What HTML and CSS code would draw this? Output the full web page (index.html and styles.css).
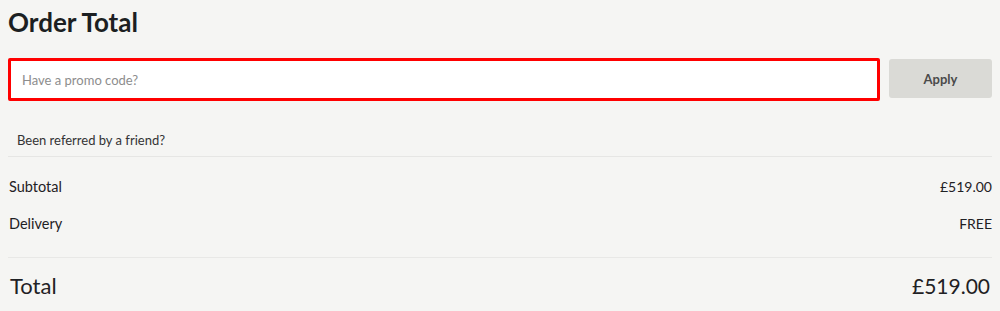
FILE: index.html
```html
<!DOCTYPE html>
<html>
<head>
<meta charset="utf-8">
<link rel="stylesheet" href="styles.css">
</head>
<body>
<div class="order">
  <h1 class="title">Order Total</h1>
  <div class="promo">
    <input class="promo-input" type="text" placeholder="Have a promo code?">
    <button class="apply">Apply</button>
  </div>
  <div class="referral">Been referred by a friend?</div>
  <div class="lines">
    <div class="line"><span>Subtotal</span><span class="amt-sm">£519.00</span></div>
    <div class="line"><span>Delivery</span><span class="amt-sm">FREE</span></div>
  </div>
  <div class="total"><span>Total</span><span class="amt-lg">£519.00</span></div>
</div>
</body>
</html>
```
FILE: styles.css
```css
html, body {
  margin: 0;
  padding: 0;
  background: #f5f5f3;
}
body {
  padding: 0 8px;
  font-family: "Lato", "Liberation Sans", sans-serif;
  color: #1f2124;
}
.order {
  display: flex;
  flex-direction: column;
}
.title {
  margin: 0;
  padding-top: 7px;
  font-size: 26px;
  line-height: 30px;
  font-weight: 700;
  color: #1c1f22;
}
.promo {
  display: flex;
  align-items: flex-start;
  gap: 9px;
  margin-top: 21px;
}
.promo-input {
  flex: 1;
  box-sizing: border-box;
  height: 43px;
  border: 3px solid #ff0000;
  border-radius: 2px;
  background: #fff;
  padding: 0 11px;
  font-family: inherit;
  font-size: 13px;
  color: #333;
  outline: none;
}
.promo-input::placeholder {
  color: #8d8d8d;
}
.apply {
  box-sizing: border-box;
  width: 103px;
  height: 39px;
  margin-top: 1px;
  border: none;
  border-radius: 3px;
  background: #dadad6;
  font-family: inherit;
  font-size: 13px;
  font-weight: 700;
  color: #4a4a4a;
}
.referral {
  padding: 29px 9px 0;
  height: 26px;
  font-size: 13px;
  line-height: 20px;
  color: #333;
  border-bottom: 1px solid #e6e6e4;
}
.lines {
  display: flex;
  flex-direction: column;
  gap: 17px;
  padding: 20px 0 23px;
  border-bottom: 1px solid #e8e8e6;
}
.line {
  display: flex;
  justify-content: space-between;
  font-size: 14.5px;
  line-height: 20px;
  padding-left: 1px;
}
.amt-sm {
  font-size: 14px;
}
.total {
  display: flex;
  justify-content: space-between;
  padding: 14px 2px 0 2px;
  font-size: 22px;
  line-height: 28px;
}
.amt-lg {
  font-size: 21px;
}
```
